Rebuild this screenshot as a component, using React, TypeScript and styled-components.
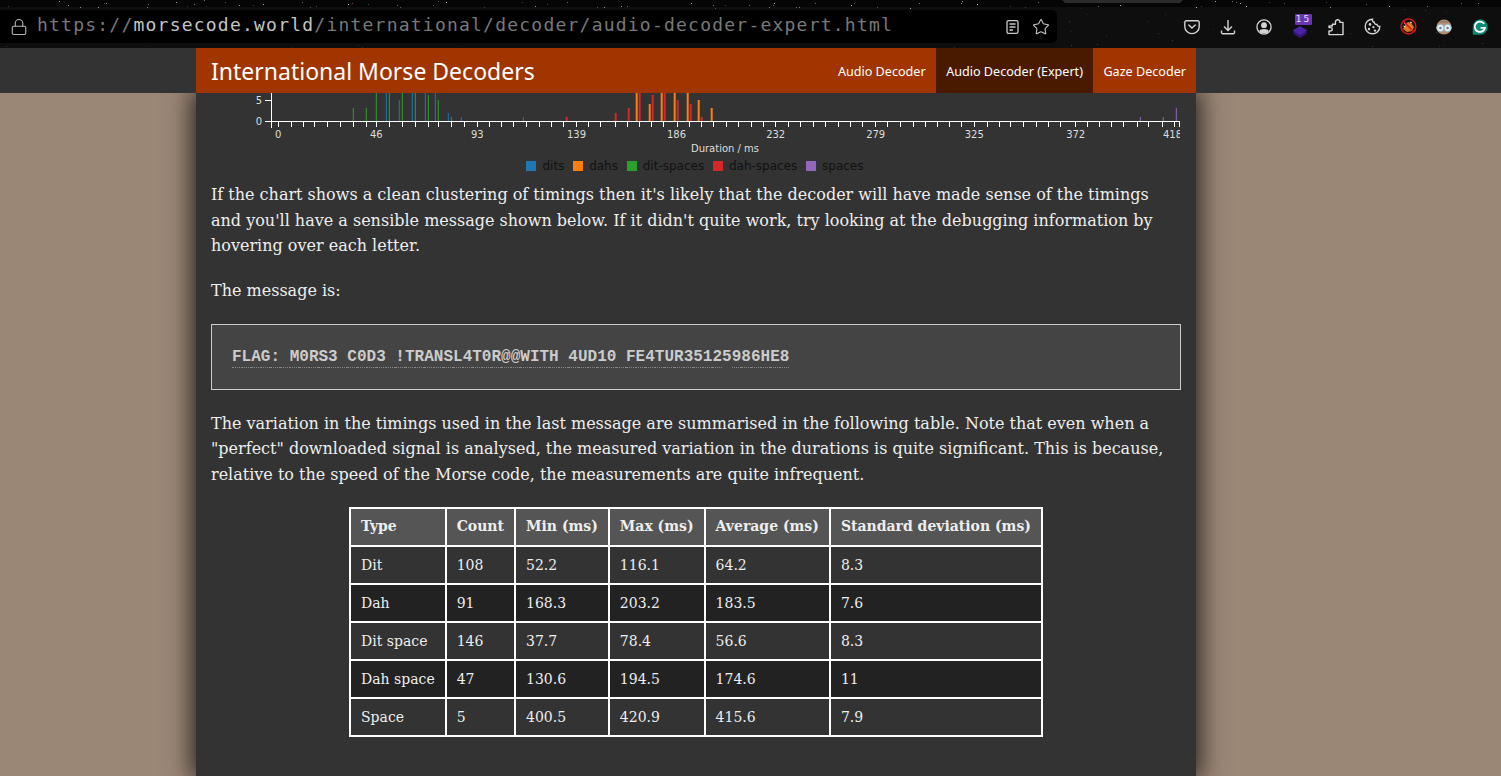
import React from 'react';
import styled, { createGlobalStyle } from 'styled-components';
import { Lock, Star } from 'lucide-react';

const Global = createGlobalStyle`
  html, body { margin: 0; padding: 0; height: 100%; overflow: hidden; background: #9b8776; }
  #root { height: 100%; }
`;

const Page = styled.div`
  height: 776px;
  display: flex;
  flex-direction: column;
  overflow: hidden;
`;

const Chrome = styled.header`
  position: relative;
  height: 48px;
  flex: none;
  background: linear-gradient(#050505 0, #050505 7px, #0e0e0e 7px);
  display: flex;
  align-items: center;
  padding-top: 5px;
  box-sizing: border-box;
`;

const Stars = styled.svg`
  position: absolute;
  inset: 0;
  pointer-events: none;
`;

const UrlBar = styled.div`
  position: relative;
  width: 1057px;
  height: 33px;
  flex: none;
  background: #000;
  border-radius: 0 5px 5px 0;
  display: flex;
  align-items: center;
  padding: 0 6px 0 10px;
  box-sizing: border-box;
  gap: 9px;
  color: #b5b5b5;
`;

const Url = styled.div`
  flex: 1;
  font: 18px/1 "DejaVu Sans Mono", monospace;
  letter-spacing: 1.22px;
  color: #787878;
  white-space: nowrap;
  margin-top: -3px;
  b { font-weight: 400; color: #c4c4c4; }
  i { font-style: normal; color: #787878; }
`;

const UrlActions = styled.div`
  display: flex;
  align-items: center;
  gap: 13px;
  padding-right: 1px;
  color: #c8c8c8;
`;

const Toolbar = styled.div`
  position: relative;
  flex: 1;
  display: flex;
  justify-content: flex-end;
  padding-right: 3px;
`;

const ToolIcon = styled.div`
  position: relative;
  width: 36px;
  height: 20px;
  display: flex;
  align-items: center;
  justify-content: center;
  color: #d4d4d4;
`;

const Badge = styled.span`
  position: absolute;
  left: 13px;
  top: -3px;
  width: 17px;
  height: 11px;
  background: #6a35b5;
  border-radius: 1px;
  color: #e8e0f5;
  font: 9px/11px "DejaVu Sans", sans-serif;
  letter-spacing: 2px;
  text-align: center;
`;

const NavStrip = styled.div`
  height: 45px;
  flex: none;
  background: #333;
  position: relative;
  z-index: 2;
`;

const Nav = styled.nav`
  width: 1000px;
  height: 45px;
  margin-left: 196px;
  background: #a03500;
  display: flex;
  align-items: stretch;
  color: #fff;
`;

const Brand = styled.div`
  flex: 1;
  padding-left: 15px;
  font: 23px/46px "Noto Sans", sans-serif;
  white-space: nowrap;
`;

const NavLink = styled.a<{ $active?: boolean }>`
  padding: 0 ${(p) => (p.$active ? '10.5px' : '10px')};
  font: 12.6px/47px "Noto Sans", sans-serif;
  color: #fff;
  background: ${(p) => (p.$active ? '#4a1a00' : 'transparent')};
  white-space: nowrap;
`;

const Main = styled.main`
  width: 1000px;
  flex: 1;
  margin-left: 196px;
  background: #333;
  box-shadow: 0 0 24px 4px rgba(0, 0, 0, 0.75);
  padding: 0 15px;
  box-sizing: border-box;
  color: #eee;
  font: 16px/25.6px "DejaVu Serif", serif;
  min-height: 0;
`;

const ChartSvg = styled.svg`
  display: block;
  margin: 0 -15px;
  text { font-family: "DejaVu Sans", sans-serif; font-size: 10px; fill: #ddd; }
`;

const Legend = styled.div`
  display: flex;
  justify-content: center;
  gap: 8.75px;
  height: 16px;
  align-items: center;
  margin-left: -2px;
`;

const LegendItem = styled.span`
  display: flex;
  align-items: center;
  gap: 6px;
  font: 12px/16px "DejaVu Sans", sans-serif;
  color: #111;
`;

const Swatch = styled.i<{ $c: string }>`
  width: 10px;
  height: 10px;
  background: ${(p) => p.$c};
`;

const Para = styled.p`
  margin: 0 0 19.6px;
`;

const Intro = styled(Para)`
  margin-top: 8px;
`;

const CodeBox = styled.div`
  border: 1px solid #ccc;
  background: #444;
  padding: 20px;
  height: 66px;
  box-sizing: border-box;
  margin: 20px 0 20.6px;
  font: 700 16px/24px "Liberation Mono", monospace;
  color: #ccc;
  white-space: pre;
`;

const Letter = styled.span<{ $plain?: boolean }>`
  border-bottom: ${(p) => (p.$plain ? 'none' : '1px dotted #888')};
  padding-bottom: 1px;
`;

const Table = styled.table`
  border-collapse: collapse;
  margin: 0 auto;
  border: 2px solid #fff;
  font: 14px/24px "DejaVu Serif", serif;
  color: #eee;
`;

const Th = styled.th`
  border: 2px solid #fff;
  background: #555;
  padding: 5.5px 10px 6.5px;
  text-align: left;
  font-weight: 700;
  white-space: nowrap;
`;

const Td = styled.td<{ $odd: boolean }>`
  border: 2px solid #fff;
  background: ${(p) => (p.$odd ? '#222' : '#333')};
  padding: 6px 10px;
  white-space: nowrap;
`;

/* ---------- data ---------- */
const BLUE = '#1f77b4', ORANGE = '#ff7f0e', GREEN = '#2ca02c', RED = '#d62728', PURPLE = '#9467bd';

// [x (page px), bar top (page px), colour, width]
const bars: [number, number, string, number][] = [
  [353.3, 108, GREEN, 1], [366.3, 108, GREEN, 1], [376.3, 90, GREEN, 1], [386.3, 90, BLUE, 1],
  [389.3, 90, GREEN, 1], [399.3, 100, BLUE, 1], [402.3, 90, GREEN, 1], [412.3, 90, BLUE, 1],
  [415.3, 90, GREEN, 1], [425.3, 90, BLUE, 1], [428.3, 95, GREEN, 1], [435.3, 90, BLUE, 1],
  [438.3, 100, GREEN, 1], [448.3, 113, BLUE, 1], [451.3, 117, GREEN, 1], [461.3, 117, BLUE, 1],
  [523.3, 117, BLUE, 1], [566.7, 117, RED, 2], [615.7, 113, RED, 2], [628.7, 108, RED, 2],
  [636.7, 90, ORANGE, 2], [639.7, 90, RED, 2], [649.7, 104, ORANGE, 2], [652.7, 95, RED, 2],
  [661.7, 90, ORANGE, 2], [664.7, 90, RED, 2], [674.7, 90, ORANGE, 2], [677.7, 100, RED, 2],
  [687.7, 90, ORANGE, 2], [690.7, 104, RED, 2], [698.7, 100, ORANGE, 2], [701.7, 117, RED, 2],
  [711.7, 108, ORANGE, 2], [1140.3, 117, PURPLE, 1], [1163.3, 117, PURPLE, 1], [1176.3, 108, PURPLE, 1],
];

const tickZoomA = [115, 154, 190, 223, 262, 301, 340, 379, 409, 448, 487, 526, 565, 595, 634, 673, 712, 748, 784, 820, 859, 898, 934, 970, 1009, 1045, 1081, 1126, 1162, 1198, 1234, 1270, 1310, 1346, 1382, 1418, 1457];
const tickZoomB = [40, 79, 115, 154, 190, 226, 265, 301, 340, 376, 415, 451, 487, 526, 562, 601, 640, 676, 712, 748, 784, 823, 862, 898, 931, 970, 1009, 1045, 1081, 1126, 1162, 1198, 1234, 1270, 1312, 1345, 1387, 1423, 1438];
const ticks = [...tickZoomA.map((z) => 240 + z / 3), ...tickZoomB.map((z) => 700 + z / 3)];

const xLabels: [string, number][] = [['0', 278.3], ['46', 376.3], ['93', 477.3], ['139', 576.5], ['186', 676.5], ['232', 775.7], ['279', 875.7], ['325', 974.3], ['372', 1075.7], ['418', 1172.5]];

const legend: [string, string][] = [['dits', BLUE], ['dahs', ORANGE], ['dit-spaces', GREEN], ['dah-spaces', RED], ['spaces', PURPLE]];

const flag = 'FLAG: M0RS3 C0D3 !TRANSL4T0R@@WITH 4UD10 FE4TUR35125986HE8';

const rows: string[][] = [
  ['Dit', '108', '52.2', '116.1', '64.2', '8.3'],
  ['Dah', '91', '168.3', '203.2', '183.5', '7.6'],
  ['Dit space', '146', '37.7', '78.4', '56.6', '8.3'],
  ['Dah space', '47', '130.6', '194.5', '174.6', '11'],
  ['Space', '5', '400.5', '420.9', '415.6', '7.9'],
];
const heads = ['Type', 'Count', 'Min (ms)', 'Max (ms)', 'Average (ms)', 'Standard deviation (ms)'];

function starField() {
  let s = 12345;
  const r = () => ((s = (s * 16807) % 2147483647) / 2147483647);
  const out: { x: number; y: number; o: number; c: string }[] = [];
  for (let i = 0; i < 190; i++) {
    const x = r() * 1501;
    const top = r() < 0.45;
    const y = top ? r() * 8 : 8 + r() * 40;
    if (!top && y > 9 && y < 44 && x < 1058) continue;
    const o = top ? 0.2 + r() * 0.6 : 0.06 + r() * 0.16;
    const c = r() < 0.06 ? '#e0805a' : '#ffffff';
    out.push({ x: Math.round(x), y: Math.round(y), o, c });
  }
  return out;
}
const stars = starField();

/* ---------- icons ---------- */
const Reader = () => (
  <svg width="13" height="16" viewBox="0 0 13 16" fill="none" stroke="currentColor" strokeWidth="1.3">
    <rect x="1" y="1.6" width="11" height="12.8" rx="1.6" />
    <path d="M3.5 5h6M3.5 8h6M3.5 11h3.5" />
  </svg>
);
const Pocket = () => (
  <svg width="16" height="16" viewBox="0 0 16 16" fill="none" stroke="currentColor" strokeWidth="1.4">
    <path d="M2.2 1.8h11.6a1.4 1.4 0 0 1 1.4 1.4v4.2a7.2 7.2 0 0 1-14.4 0V3.2a1.4 1.4 0 0 1 1.4-1.4z" />
    <path d="M4.8 6l3.2 3 3.2-3" strokeLinecap="round" />
  </svg>
);
const Download = () => (
  <svg width="16" height="16" viewBox="0 0 16 16" fill="none" stroke="currentColor" strokeWidth="1.4">
    <path d="M8 1v10M4 7.4l4 4 4-4" />
    <path d="M1.5 11.5v2a1.2 1.2 0 0 0 1.2 1.2h10.6a1.2 1.2 0 0 0 1.2-1.2v-2" />
  </svg>
);
const Account = () => (
  <svg width="16" height="16" viewBox="0 0 16 16">
    <circle cx="8" cy="8" r="7.1" fill="none" stroke="currentColor" strokeWidth="1.3" />
    <circle cx="8" cy="6.2" r="2.9" fill="currentColor" />
    <path d="M3.2 12.4c.6-1.6 2.2-2.3 4.8-2.3s4.2.7 4.8 2.3a7 7 0 0 1-9.6 0z" fill="currentColor" />
  </svg>
);
const Layers = () => (
  <svg width="16" height="12" viewBox="0 0 16 12" style={{ marginTop: 10 }}>
    <path d="M8 3l7.5 4-7.5 5-7.5-5z" fill="#34167a" />
    <path d="M8 0l7.5 4.5L8 9 .5 4.5z" fill="#4d22a6" />
  </svg>
);
const Puzzle = () => (
  <svg width="16" height="18" viewBox="0 0 16 18" fill="none" stroke="currentColor" strokeWidth="1.4" strokeLinejoin="round">
    <path d="M1 8h3.4V6.2h3V4a2.3 2.3 0 0 1 4.4-.9c.2.5.1.9.1 1.3h3.1v12.2H1v-3.6h1.6a1.7 1.7 0 0 0 0-3.4H1z" />
  </svg>
);
const CookieIcon = () => (
  <svg width="17" height="17" viewBox="0 0 17 17">
    <path d="M8.5 1.2a7.3 7.3 0 1 0 7.3 7.3c-1.6.2-2.6-.6-2.8-2-1.5.1-2.6-.8-2.7-2.3-1.4-.1-2.1-1.3-1.8-3z" fill="none" stroke="currentColor" strokeWidth="1.4" />
    <circle cx="6" cy="6.4" r="1.3" fill="currentColor" />
    <circle cx="5" cy="11" r="1.2" fill="currentColor" />
    <circle cx="9.4" cy="9.2" r="1.1" fill="currentColor" />
    <circle cx="11" cy="12.6" r="1.2" fill="currentColor" />
  </svg>
);
const NoFox = () => (
  <svg width="17" height="17" viewBox="0 0 17 17">
    <circle cx="8.5" cy="8.5" r="7.8" fill="#1a1010" />
    <path d="M3 11l2-4 3-3 3 1 3 4-2 4-5 1z" fill="#e0761f" />
    <path d="M4 5l2 1.5M10 4l2 1M3.5 8l2 1" stroke="#eee" strokeWidth="1" />
    <circle cx="8.5" cy="8.5" r="7.4" fill="none" stroke="#d01818" strokeWidth="1.5" />
    <path d="M3.2 3.2l10.6 10.6" stroke="#d01818" strokeWidth="1.5" />
  </svg>
);
const Goggles = () => (
  <svg width="16" height="16" viewBox="0 0 16 16">
    <circle cx="8" cy="8" r="7.6" fill="#b98c6e" />
    <path d="M2 4.4a7.6 7.6 0 0 1 12 0c-1.4-.8-3-1-6-1s-4.6.2-6 1z" fill="#8e7a68" />
    <circle cx="4.4" cy="9" r="3.6" fill="#e4f2f5" stroke="#9fc0c8" />
    <circle cx="11.6" cy="9" r="3.6" fill="#e4f2f5" stroke="#9fc0c8" />
    <circle cx="4.4" cy="9" r="1.2" fill="#6a7a8a" />
    <circle cx="11.6" cy="9" r="1.2" fill="#6a7a8a" />
  </svg>
);
const Grammarly = () => (
  <svg width="16" height="16" viewBox="0 0 16 16">
    <path d="M8 .2a7.8 7.8 0 0 1 0 15.6H.8V8A7.6 7.6 0 0 1 8 .2z" fill="#0f8a76" />
    <path d="M12.2 4.8A5.2 5.2 0 1 0 13 8.8H8.6" fill="none" stroke="#fff" strokeWidth="1.8" />
  </svg>
);

/* ---------- chart ---------- */
const Chart = () => (
  <ChartSvg width="1000" height="65" viewBox="196 93 1000 65">
    <defs>
      <clipPath id="plot">
        <rect x="271" y="93" width="909" height="65" />
      </clipPath>
    </defs>
    {bars.map(([x, top, c, w], i) => (
      <rect key={i} x={x - w / 2} y={top} width={w} height={121 - top} fill={c} />
    ))}
    <g stroke="#fff" strokeWidth="1">
      <line x1="271.5" y1="93" x2="271.5" y2="128" />
      <line x1="265" y1="100.5" x2="271" y2="100.5" />
      <line x1="265" y1="121.5" x2="271" y2="121.5" />
      <line x1="271" y1="121.5" x2="1180" y2="121.5" />
      {ticks.map((x, i) => (
        <line key={i} x1={Math.round(x) + 0.5} y1="121" x2={Math.round(x) + 0.5} y2="127" />
      ))}
    </g>
    <text x="262" y="104" textAnchor="end">5</text>
    <text x="262" y="125" textAnchor="end">0</text>
    <g clipPath="url(#plot)">
      {xLabels.map(([t, x]) => (
        <text key={t} x={x} y="138" textAnchor="middle">{t}</text>
      ))}
    </g>
    <text x="725" y="152" textAnchor="middle">Duration / ms</text>
  </ChartSvg>
);

export default function App() {
  return (
    <Page>
      <Global />
      <Chrome>
        <Stars width="1501" height="48">
          {stars.map((p, i) => (
            <rect key={i} x={p.x} y={p.y} width="1" height="1" fill={p.c} opacity={p.o} />
          ))}
          <path d="M1062 0h121l-3 3h-115z" fill="#2b2b2b" />
        </Stars>
        <UrlBar>
          <Lock size={18} strokeWidth={1.5} />
          <Url>
            https://<b>morsecode.world</b><i>/international/decoder/audio-decoder-expert.html</i>
          </Url>
          <UrlActions>
            <Reader />
            <Star size={18} strokeWidth={1.4} />
          </UrlActions>
        </UrlBar>
        <Toolbar>
          <ToolIcon><Pocket /></ToolIcon>
          <ToolIcon><Download /></ToolIcon>
          <ToolIcon><Account /></ToolIcon>
          <ToolIcon><Layers /><Badge>15</Badge></ToolIcon>
          <ToolIcon><Puzzle /></ToolIcon>
          <ToolIcon><CookieIcon /></ToolIcon>
          <ToolIcon><NoFox /></ToolIcon>
          <ToolIcon><Goggles /></ToolIcon>
          <ToolIcon><Grammarly /></ToolIcon>
        </Toolbar>
      </Chrome>
      <NavStrip>
        <Nav>
          <Brand>International Morse Decoders</Brand>
          <NavLink>Audio Decoder</NavLink>
          <NavLink $active>Audio Decoder (Expert)</NavLink>
          <NavLink>Gaze Decoder</NavLink>
        </Nav>
      </NavStrip>
      <Main>
        <Chart />
        <Legend>
          {legend.map(([t, c]) => (
            <LegendItem key={t}><Swatch $c={c} />{t}</LegendItem>
          ))}
        </Legend>
        <Intro>
          If the chart shows a clean clustering of timings then it's likely that the decoder will have made sense of the timings and you'll have a sensible message shown below. If it didn't quite work, try looking at the debugging information by hovering over each letter.
        </Intro>
        <Para>The message is:</Para>
        <CodeBox>
          {flag.split('').map((ch, i) => (
            <Letter key={i} $plain={i === 51}>{ch}</Letter>
          ))}
        </CodeBox>
        <Para>
          The variation in the timings used in the last message are summarised in the following table. Note that even when a "perfect" downloaded signal is analysed, the measured variation in the durations is quite significant. This is because, relative to the speed of the Morse code, the measurements are quite infrequent.
        </Para>
        <Table>
          <thead>
            <tr>{heads.map((h) => <Th key={h}>{h}</Th>)}</tr>
          </thead>
          <tbody>
            {rows.map((r, i) => (
              <tr key={r[0]}>
                {r.map((c, j) => <Td key={j} $odd={i % 2 === 1}>{c}</Td>)}
              </tr>
            ))}
          </tbody>
        </Table>
      </Main>
    </Page>
  );
}
